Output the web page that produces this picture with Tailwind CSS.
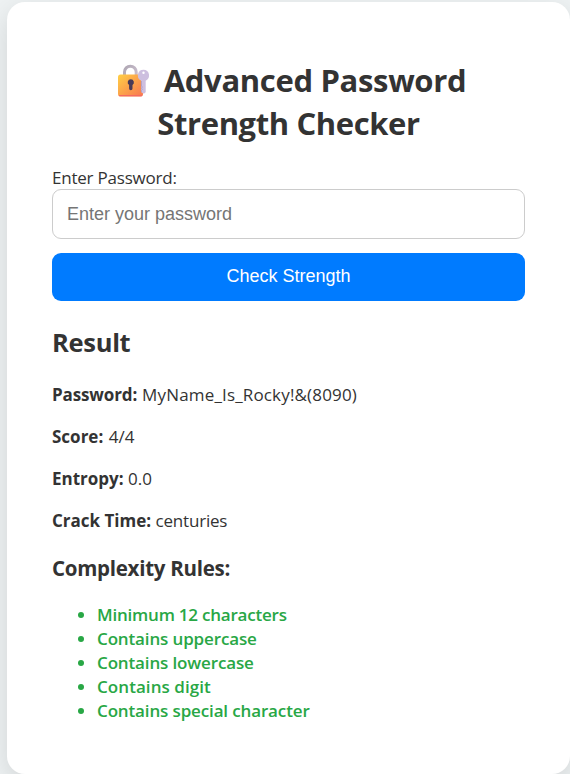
<!DOCTYPE html>
<html lang="en">
<head>
<meta charset="utf-8">
<title>Advanced Password Strength Checker</title>
<script src="https://cdn.jsdelivr.net/npm/@tailwindcss/browser@4"></script>
</head>
<body class="h-[774px] overflow-hidden bg-[#eef2f3] pl-[7px] pt-[2px] font-['Segoe_UI','Open_Sans',sans-serif] text-[17px] leading-6 text-[#333]">
<main class="h-[772px] w-[563px] rounded-[18px] bg-white px-[45px] pt-[57px] shadow-[0_9px_28px_rgba(0,0,0,0.12)]">
  <h1 class="text-center text-[31px] font-bold leading-[43px] tracking-[-0.33px]">
    <span class="flex items-center justify-center gap-[14px] pl-[6px]">
      <svg class="mb-[1px] h-[34px] w-[33px] shrink-0" viewBox="0 0 33 34" fill="none">
        <defs>
          <linearGradient id="body" x1="4" y1="11" x2="24" y2="33" gradientUnits="userSpaceOnUse"><stop stop-color="#ffcb45"/><stop offset="1" stop-color="#f87a50"/></linearGradient>
          <linearGradient id="shackle" x1="6" y1="0" x2="20" y2="10" gradientUnits="userSpaceOnUse"><stop stop-color="#a9a2ae"/><stop offset="1" stop-color="#c9bdcc"/></linearGradient>
        </defs>
        <path d="M7.500 13V9a5.850 5.850 0 0 1 11.700 0v4" stroke="url(#shackle)" stroke-width="3"/>
        <rect x="1" y="11.500" width="25" height="22" rx="2.500" fill="url(#body)"/>
        <path d="M2.500 32.700h22" stroke="#f46b62" stroke-width="1.200" stroke-linecap="round"/>
        <path d="M13.800 16.200a3.100 3.100 0 0 0-1.700 5.700v3.700a1.700 1.700 0 0 0 3.400 0v-3.700a3.100 3.100 0 0 0-1.700-5.700Z" fill="#493a57"/>
        <path fill-rule="evenodd" d="M26.500 6.800a5.700 5.700 0 0 0-2.500 10.800v11.500l2 1.400h1.200l1.500-1.300V17.700a5.700 5.700 0 0 0-2.200-10.900Zm0 1.700a1.200 1.200 0 1 1 0 2.400 1.200 1.200 0 0 1 0-2.400Z" fill="#cdbfdf"/>
        <path d="M24.400 18v5l1 1-1 1.200 1 1-1 1V29" stroke="#aa97bd" stroke-width=".8"/>
      </svg>
      <span>Advanced Password</span>
    </span>
    <span class="block tracking-[-0.39px]">Strength Checker</span>
  </h1>
  <label for="pw" class="mt-[20px] block h-6 leading-[26px] tracking-[-0.22px]">Enter Password:</label>
  <input id="pw" type="text" placeholder="Enter your password" class="block h-[50px] w-[473px] rounded-[9px] border border-[#ccc] px-[14px] font-['Liberation_Sans',sans-serif] text-[18px] placeholder:text-[#757575]">
  <button class="mt-[14px] block h-[48px] w-[473px] rounded-[9px] bg-[#007bff] pb-[2px] font-['Liberation_Sans',sans-serif] text-[18px] text-white">Check Strength</button>
  <h2 class="mt-[23px] text-[25.5px] font-bold leading-9 tracking-[-0.3px]">Result</h2>
  <div class="mt-[23px] flex flex-col gap-[18px]">
    <p><b class="tracking-[-0.12px]">Password:</b> <span class="ml-[0.5px] tracking-[0.16px]">MyName_Is_Rocky!&amp;(8090)</span></p>
    <p><b>Score:</b> <span class="ml-[1px]">4/4</span></p>
    <p><b>Entropy:</b> <span>0.0</span></p>
    <p><b>Crack Time:</b> <span class="tracking-[-0.2px]">centuries</span></p>
  </div>
  <h3 class="mt-[21px] text-[20.5px] font-bold leading-7 tracking-[-0.27px]">Complexity Rules:</h3>
  <ul class="mt-[21px] list-disc pl-[45px] font-semibold tracking-[-0.14px] text-[#28a745]">
    <li class="tracking-[-0.22px]">Minimum 12 characters</li>
    <li>Contains uppercase</li>
    <li>Contains lowercase</li>
    <li class="tracking-[0.06px]">Contains digit</li>
    <li>Contains special character</li>
  </ul>
</main>
</body>
</html>
